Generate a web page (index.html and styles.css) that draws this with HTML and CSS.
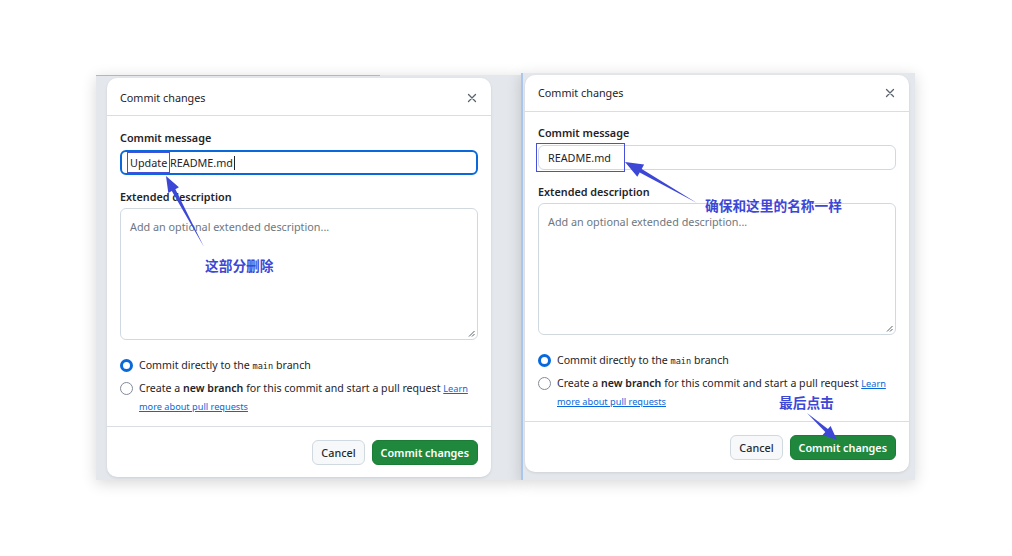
FILE: index.html
```html
<!DOCTYPE html>
<html lang="zh-CN">
<head>
<meta charset="utf-8">
<title>Commit changes</title>
<link rel="stylesheet" href="styles.css">
</head>
<body>
<div class="canvas">
  <div class="shot">
    <div class="panel panel-left">
      <div class="crumb-line"></div>
      <div class="dialog">
        <div class="dlg-head">
          <span class="dlg-title">Commit changes</span>
          <svg class="close" width="10" height="10" viewBox="0 0 10 10"><path d="M1.5 1.5l7 7M8.5 1.5l-7 7" stroke="#59636e" stroke-width="1.3" stroke-linecap="round"/></svg>
        </div>
        <div class="dlg-body">
          <div class="field-label">Commit message</div>
          <div class="input input-focus">
            <span class="input-text">Update README.md</span><span class="caret"></span>
            <span class="mark-box mark-left"></span>
          </div>
          <div class="field-label field-gap">Extended description</div>
          <div class="textarea">
            <span class="placeholder">Add an optional extended description...</span>
            <svg class="grip" width="7" height="7" viewBox="0 0 7 7"><path d="M6.5 1L1 6.5M6.5 4L4 6.5" stroke="#57606a" stroke-width="1"/></svg>
          </div>
          <div class="radios">
            <div class="radio-row"><span class="radio checked"></span><span class="radio-text">Commit directly to the <code>main</code> branch</span></div>
            <div class="radio-row"><span class="radio"></span><span class="radio-text">Create a <b>new branch</b> for this commit and start a pull request <a href="#" class="link">Learn more about pull requests</a></span></div>
          </div>
        </div>
        <div class="dlg-foot">
          <button class="btn">Cancel</button>
          <button class="btn btn-primary">Commit changes</button>
        </div>
      </div>
    </div>
    <div class="panel panel-right">
      <div class="dialog dialog-compact">
        <div class="dlg-head">
          <span class="dlg-title">Commit changes</span>
          <svg class="close" width="10" height="10" viewBox="0 0 10 10"><path d="M1.5 1.5l7 7M8.5 1.5l-7 7" stroke="#59636e" stroke-width="1.3" stroke-linecap="round"/></svg>
        </div>
        <div class="dlg-body">
          <div class="field-label">Commit message</div>
          <div class="input">
            <span class="input-text">README.md</span>
            <span class="mark-box mark-right"></span>
          </div>
          <div class="field-label field-gap">Extended description</div>
          <div class="textarea">
            <span class="placeholder">Add an optional extended description...</span>
            <svg class="grip" width="7" height="7" viewBox="0 0 7 7"><path d="M6.5 1L1 6.5M6.5 4L4 6.5" stroke="#57606a" stroke-width="1"/></svg>
          </div>
          <div class="radios">
            <div class="radio-row"><span class="radio checked"></span><span class="radio-text">Commit directly to the <code>main</code> branch</span></div>
            <div class="radio-row"><span class="radio"></span><span class="radio-text">Create a <b>new branch</b> for this commit and start a pull request <a href="#" class="link">Learn more about pull requests</a></span></div>
          </div>
        </div>
        <div class="dlg-foot">
          <button class="btn">Cancel</button>
          <button class="btn btn-primary">Commit changes</button>
        </div>
      </div>
    </div>
  </div>

  <svg class="arrows" width="1012" height="556" viewBox="0 0 1012 556">
    <polygon points="204,247 175.4,189.2 178.9,187.3 166,176 168.3,192.9 171.8,191" fill="#3d47d6"/>
    <polygon points="697,203 641.7,169 644.1,164.6 625,162 637.3,176.8 639.7,172.4" fill="#3d47d6"/>
    <polygon points="807,413 825.3,432.1 822.6,435.1 837,440 830.6,426.1 827.9,429.1" fill="#3d47d6"/>
  </svg>
  <div class="note note-delete">这部分删除</div>
  <div class="note note-same">确保和这里的名称一样</div>
  <div class="note note-click">最后点击</div>
</div>
</body>
</html>
```

FILE: styles.css
```css
* { box-sizing: border-box; }
html, body { margin: 0; padding: 0; background: #ffffff; }
body { font-family: "Noto Sans", "Open Sans", "Liberation Sans", sans-serif; color: #1f2328; }

.canvas { position: relative; width: 1012px; height: 556px; overflow: hidden; }

.shot {
  display: flex;
  margin-left: 96px;
  padding-top: 73px;
  width: 819px;
}
.shot > .panel { box-shadow: 0 3px 14px rgba(0,0,0,0.16); }

.panel { background: #e4e7eb; display: flex; flex-direction: column; }
.panel-left { width: 425px; height: 405px; margin-top: 2px; padding-left: 11px; }
.panel-right { width: 394px; height: 407px; border-left: 2px solid #a8c6ee; padding-left: 2px; }

.crumb-line { height: 1px; width: 284px; margin-left: -11px; background: #b3b7bd; }

.dialog {
  width: 384px;
  background: #fff;
  border-radius: 10px;
  box-shadow: 0 1px 3px rgba(0,0,0,0.10);
  display: flex;
  flex-direction: column;
  margin-top: 2px;
}

.dlg-head {
  height: 38px;
  border-bottom: 1px solid #d8dee4;
  display: flex;
  align-items: center;
  justify-content: space-between;
  padding: 2px 14px 0 13px;
}
.dialog-compact .dlg-head { height: 37px; padding-top: 0; padding-bottom: 1px; }
.dlg-title { font-size: 10.8px; font-weight: 400; color: #1f2328; }
.close { display: block; }

.dlg-body { padding: 13px 13px 0 13px; display: flex; flex-direction: column; }
.dialog-compact .dlg-body { padding-top: 12px; }
.field-label { font-size: 10.8px; font-weight: 600; line-height: 16px; height: 16px; margin-bottom: 5px; padding-top: 1px; }
.field-gap { margin-top: 13px; margin-bottom: 4px; }

.input {
  position: relative;
  height: 25px;
  border: 1px solid #d1d9e0;
  border-radius: 6px;
  display: flex;
  align-items: center;
  padding-left: 9px;
  font-size: 10.8px;
}
.input-focus { border: 2px solid #0969da; padding-left: 8px; }
.input-text { color: #1f2328; }
.caret { display: inline-block; width: 1px; height: 14px; background: #1f2328; margin-left: 1px; }

.mark-box { position: absolute; border: 1.5px solid #4650d8; }
.mark-left { left: 5px; top: 0px; width: 43px; height: 21px; }
.mark-right { left: -3px; top: -3px; width: 89px; height: 29px; }

.textarea {
  position: relative;
  height: 132px;
  border: 1px solid #d1d9e0;
  border-radius: 6px;
  padding: 5px 9px;
}
.placeholder { font-size: 10.8px; color: #6e7781; }
.grip { position: absolute; right: 2px; bottom: 2px; }

.radios { display: flex; flex-direction: column; gap: 5px; padding: 16px 0 11px; }
.radio-row { display: flex; align-items: flex-start; gap: 6px; font-size: 10.6px; line-height: 18px; color: #1f2328; }
.radio {
  flex: none;
  width: 13px; height: 13px;
  margin-top: 2.5px;
  border-radius: 50%;
  border: 1px solid #818b98;
  background: #fff;
}
.radio.checked { border: 3.5px solid #0969da; }
.radio-text { flex: 1; }
.radio-text b { font-weight: 600; }
code { font-family: "DejaVu Sans Mono", "Liberation Mono", monospace; font-size: 8.6px; line-height: 1; }
.link { color: #0969da; font-size: 9.2px; line-height: 1; text-decoration: underline; }

.dlg-foot {
  border-top: 1px solid #d8dee4;
  display: flex;
  justify-content: flex-end;
  gap: 7px;
  padding: 13px 13px 12px;
}
.btn {
  font-family: inherit;
  height: 25px;
  border-radius: 6px;
  border: 1px solid #d1d9e0;
  background: #f6f8fa;
  color: #25292e;
  font-size: 10.8px;
  font-weight: 500;
  padding: 0 8px;
}
.btn-primary { background: #1f883d; border-color: #1b7c36; color: #fff; font-weight: 600; padding: 0 8px; }

.arrows { position: absolute; left: 0; top: 0; pointer-events: none; }

.note {
  position: absolute;
  font-family: "Noto Sans CJK SC", sans-serif;
  font-weight: 700;
  font-size: 13.7px;
  line-height: 16px;
  color: #3d47d6;
  white-space: nowrap;
}
.note-delete { left: 205px; top: 257px; }
.note-same { left: 705px; top: 197px; }
.note-click { left: 779px; top: 394px; }
```
